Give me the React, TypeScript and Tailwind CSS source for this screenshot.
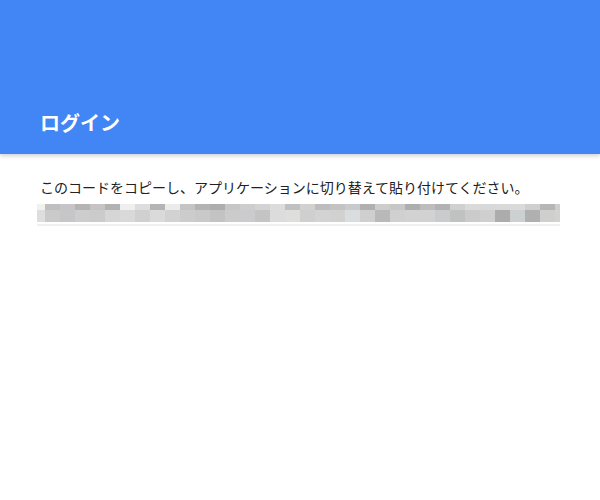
import React from "react";

// Obscured code preview: two rows of grey tiles (15px columns, partial at both ends)
const TOP = [
  "#f2f2ec", "#bfbfbf", "#c5c5c8", "#b4b4b4", "#c4c4c4", "#b2b2b2", "#efefef", "#dddddd", "#b4b4b4", "#ebebeb", "#c4c4c4", "#b3b3b3",
  "#adadad", "#c6c6c6", "#cdcdcd", "#d3d3d3", "#dcdcdc", "#c0c0c4", "#d1d1cd", "#bdbdbd", "#c3c3c3", "#c7cbcb", "#b0b0b0", "#cdcdcd",
  "#c7c7c7", "#aeaeae", "#bdbdbd", "#b2b2b2", "#d0d0d0", "#dadada", "#d8d8d8", "#d9d9d9", "#dadada", "#cfcfcf", "#b6b6b6", "#c8d0d4",
];
const BOTTOM = [
  "#dedede", "#cacaca", "#c6c6c9", "#cdcdcd", "#cbcbcb", "#d6d6d6", "#d9d9d9", "#d0d0d0", "#dadada", "#d2d2d2", "#cccccc", "#c9c9c9",
  "#c3c3c3", "#cbcbcb", "#cbcbcd", "#c4c4c4", "#dcdcdc", "#dededc", "#cfcfcf", "#d3d3d3", "#d1d1cf", "#d9dde0", "#cfcfcf", "#b9b9b9",
  "#d0d0d0", "#d2d2d2", "#d2d2d2", "#c9cbcd", "#c0c2c2", "#cbcbcb", "#cfcfcf", "#acacac", "#ccd0d0", "#b0b0b0", "#cfcfcd", "#d2d2d2",
];

function widthOf(i: number) {
  if (i === 0) return 8;
  if (i === TOP.length - 1) return 5;
  return 15;
}

function TileRow({ colors, height }: { colors: string[]; height: string }) {
  return (
    <div className={`flex ${height}`}>
      {colors.map((c, i) => (
        <div key={i} className="shrink-0" style={{ width: widthOf(i), backgroundColor: c }} />
      ))}
    </div>
  );
}

export default function App() {
  return (
    <div
      className="w-[600px] h-[500px] bg-white overflow-hidden"
      style={{ fontFamily: '"Noto Sans CJK JP", "Noto Sans", sans-serif' }}
    >
      <header className="h-[154px] bg-[#4285f4] pt-[109px] px-10 shadow-[0_2px_4px_rgba(0,0,0,0.18)] relative">
        <h1 className="text-white text-[20px] font-bold leading-[28px]">ログイン</h1>
      </header>
      <main className="pt-[23px]">
        <p className="pl-10 text-[14px] leading-[20px] text-[#212121]">
          このコードをコピーし、アプリケーションに切り替えて貼り付けてください。
        </p>
        <div className="ml-[37px] mt-[7px] w-[523px]">
          <TileRow colors={TOP} height="h-[6px]" />
          <TileRow colors={BOTTOM} height="h-[12px]" />
          <div className="mt-[2px] h-[2px] bg-[#f0f0f0]" />
        </div>
      </main>
    </div>
  );
}
